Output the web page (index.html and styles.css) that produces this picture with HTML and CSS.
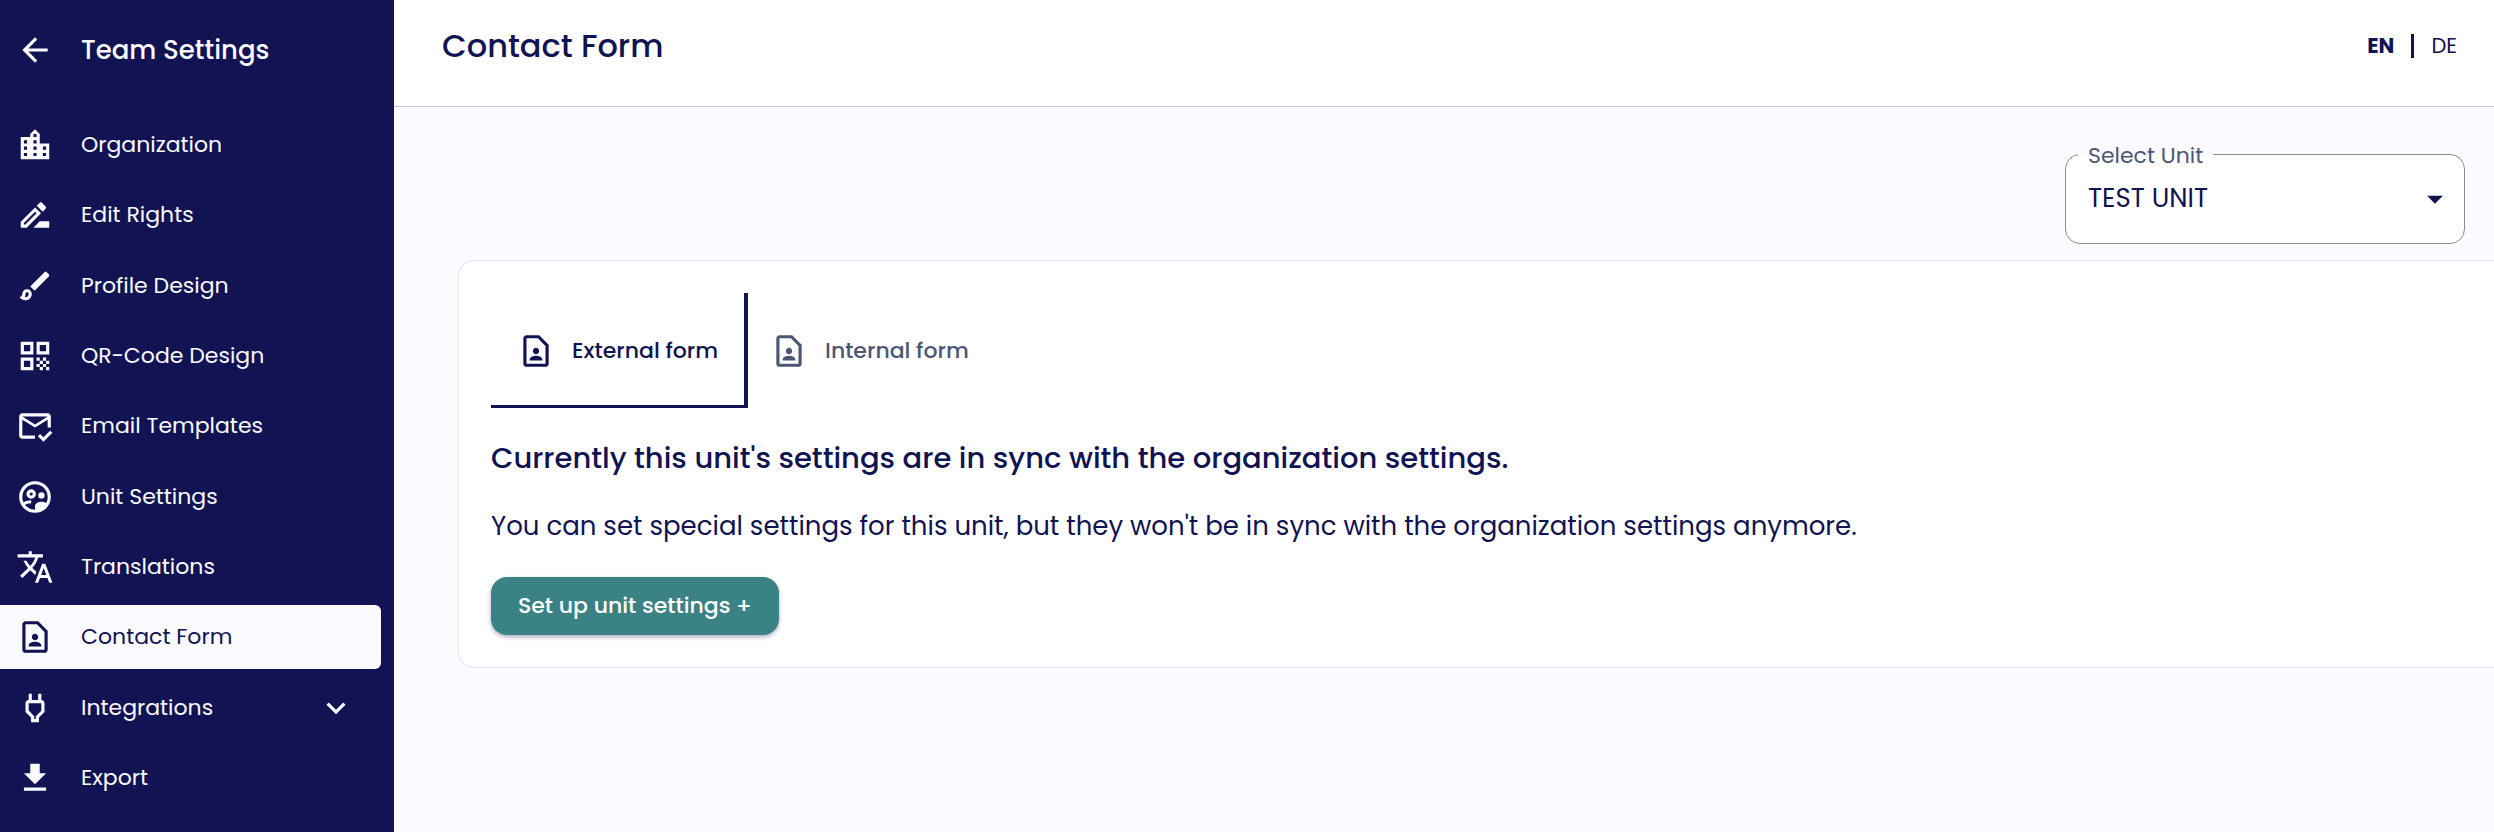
FILE: index.html
```html
<!DOCTYPE html>
<html lang="en">
<head>
<meta charset="utf-8">
<meta name="viewport" content="width=device-width, initial-scale=1">
<title>Contact Form</title>
<link rel="stylesheet" href="styles.css">
</head>
<body>
<svg class="sprite" aria-hidden="true">
  <symbol id="contact-page" viewBox="0 0 24 24"><path d="M13.17 4L18 8.83V20H6V4h7.17M14 2H6c-1.1 0-2 .9-2 2v16c0 1.1.9 2 2 2h12c1.1 0 2-.9 2-2V8l-6-6zM12 14c1.1 0 2-.9 2-2s-.9-2-2-2-2 .9-2 2 .9 2 2 2zM16 17.43c0-.81-.48-1.53-1.22-1.85-.85-.37-1.79-.58-2.78-.58s-1.93.21-2.78.58C8.48 15.9 8 16.62 8 17.43V18h8v-.57z"/></symbol>
</svg>
<div class="app">
  <aside class="sidebar">
    <a class="back" href="#"><svg class="icon" viewBox="0 0 24 24"><path d="M20 11H7.83l5.59-5.59L12 4l-8 8 8 8 1.41-1.41L7.83 13H20v-2z"/></svg><span>Team Settings</span></a>
    <nav class="menu">
      <a class="item" href="#"><svg class="icon" viewBox="0 0 24 24"><path d="M15 11V5l-3-3-3 3v2H3v14h18V11h-6zm-8 8H5v-2h2v2zm0-4H5v-2h2v2zm0-4H5V9h2v2zm6 8h-2v-2h2v2zm0-4h-2v-2h2v2zm0-4h-2V9h2v2zm0-4h-2V5h2v2zm6 12h-2v-2h2v2zm0-4h-2v-2h2v2z"/></svg><span>Organization</span></a>
      <a class="item" href="#"><svg class="icon" viewBox="0 0 24 24"><path d="m15 16-4 4h10v-4zM12.06 7.19 3 16.25V20h3.75l9.06-9.06-3.75-3.75zM5.92 18H5v-.92l7.06-7.06.92.92L5.92 18zM18.71 8.04a.996.996 0 0 0 0-1.41l-2.34-2.34c-.2-.2-.45-.29-.71-.29s-.51.1-.7.29l-1.83 1.83 3.75 3.75z"/></svg><span>Edit Rights</span></a>
      <a class="item" href="#"><svg class="icon" viewBox="0 0 24 24"><path d="M7 16c.55 0 1 .45 1 1 0 1.1-.9 2-2 2-.17 0-.33-.02-.5-.05.31-.55.5-1.21.5-1.95 0-.55.45-1 1-1M18.67 3c-.26 0-.51.1-.71.29L9 12.25 11.75 15l8.96-8.96a.996.996 0 0 0 0-1.41l-1.34-1.34c-.2-.2-.45-.29-.7-.29zM7 14c-1.66 0-3 1.34-3 3 0 1.31-1.16 2-2 2 .92 1.22 2.49 2 4 2 2.21 0 4-1.79 4-4 0-1.66-1.34-3-3-3z"/></svg><span>Profile Design</span></a>
      <a class="item" href="#"><svg class="icon" viewBox="0 0 24 24"><path d="M3 11h8V3H3v8zm2-6h4v4H5V5zM3 21h8v-8H3v8zm2-6h4v4H5v-4zM13 3v8h8V3h-8zm6 6h-4V5h4v4zM19 19h2v2h-2zM13 13h2v2h-2zM15 15h2v2h-2zM13 17h2v2h-2zM15 19h2v2h-2zM17 17h2v2h-2zM17 13h2v2h-2zM19 15h2v2h-2z"/></svg><span>QR-Code Design</span></a>
      <a class="item" href="#"><svg class="icon" viewBox="0 0 24 24"><path d="M12 18H4V8l8 5 8-5v5h2V6c0-1.1-.9-2-2-2H4c-1.1 0-2 .9-2 2v12c0 1.1.9 2 2 2h8v-2zm8-12-8 5-8-5h16zM17.34 22l-3.54-3.54 1.41-1.41 2.12 2.12 4.24-4.24L23 16.34 17.34 22z"/></svg><span>Email Templates</span></a>
      <a class="item" href="#"><svg class="icon" viewBox="0 0 24 24"><g fill="none" stroke="currentColor" stroke-width="2"><circle cx="12" cy="12" r="9"/><circle cx="9.6" cy="10.1" r="2"/><path d="M4.6 16.4c1.2-.9 3.2-1.4 5-1.4"/></g><circle cx="16.1" cy="11" r="2"/><path d="M12 21v-3.4c0-1.7 2.6-2.6 4.1-2.6 1.2 0 2.9.4 3.7 1.2C18.4 19 15.5 21 12 21z"/></svg><span>Unit Settings</span></a>
      <a class="item" href="#"><svg class="icon" viewBox="0 0 24 24"><path d="M12.87 15.07l-2.54-2.51.03-.03c1.74-1.94 2.98-4.17 3.71-6.53H17V4h-7V2H8v2H1v1.99h11.17C11.5 7.92 10.44 9.75 9 11.35 8.07 10.32 7.3 9.19 6.69 8h-2c.73 1.63 1.73 3.17 2.98 4.56l-5.09 5.02L4 19l5-5 3.11 3.11.76-2.04zM18.5 10h-2L12 22h2l1.12-3h4.75L21 22h2l-4.5-12zm-2.62 7l1.62-4.33L19.12 17h-3.24z"/></svg><span>Translations</span></a>
      <a class="item active" href="#" aria-current="page"><svg class="icon"><use href="#contact-page"/></svg><span>Contact Form</span></a>
      <a class="item" href="#"><svg class="icon" viewBox="0 0 24 24"><path d="M16 9v4.66l-3.5 3.51V19h-1v-1.83L8 13.65V9h8m0-6h-2v4h-4V3H8v4h-.01C6.9 6.99 6 7.89 6 8.98v5.52L9.5 18v3h5v-3l3.5-3.51V9c0-1.1-.9-2-2-2V3z"/></svg><span>Integrations</span><svg class="icon chevron" viewBox="0 0 24 24"><path d="M16.59 8.59 12 13.17 7.41 8.59 6 10l6 6 6-6z"/></svg></a>
      <a class="item" href="#"><svg class="icon" viewBox="0 0 24 24"><path d="M19 9h-4V3H9v6H5l7 7 7-7zM5 18v2h14v-2H5z"/></svg><span>Export</span></a>
    </nav>
  </aside>
  <div class="page">
    <header class="topbar">
      <h1 class="title">Contact Form</h1>
      <div class="languages">
        <button class="language current" type="button">EN</button>
        <span class="divider"></span>
        <button class="language" type="button">DE</button>
      </div>
    </header>
    <main class="content">
      <fieldset class="unit">
        <legend class="unit-legend"><label for="unit">Select Unit</label></legend>
        <div class="unit-field">
          <select class="unit-select" id="unit"><option>TEST UNIT</option></select>
          <svg class="icon unit-arrow" viewBox="0 0 24 24"><path d="m7 10 5 5 5-5z"/></svg>
        </div>
      </fieldset>
      <section class="card">
        <div class="tabs" role="tablist">
          <button class="tab selected" type="button" role="tab" aria-selected="true"><svg class="icon"><use href="#contact-page"/></svg><span>External form</span></button>
          <button class="tab" type="button" role="tab" aria-selected="false"><svg class="icon"><use href="#contact-page"/></svg><span>Internal form</span></button>
        </div>
        <h2 class="status">Currently this unit's settings are in sync with the organization settings.</h2>
        <p class="hint">You can set special settings for this unit, but they won't be in sync with the organization settings anymore.</p>
        <button class="setup" type="button">Set up unit settings +</button>
      </section>
    </main>
  </div>
</div>
</body>
</html>
```
FILE: styles.css
```css
:root {
  --navy: #111352;
  --slate: #4b5675;
  --paper: #fbfaff;
  --teal: #3a8283;
}

* {
  box-sizing: border-box;
}

body {
  margin: 0;
  color: var(--navy);
  background: var(--paper);
  font-family: Poppins, Inter, "Open Sans", sans-serif;
  font-size: 22px;
  line-height: 32px;
}

button,
select {
  margin: 0;
  padding: 0;
  border: 0;
  color: inherit;
  background: none;
  font: inherit;
}

a {
  color: inherit;
  text-decoration: none;
}

.sprite {
  display: none;
}

.icon {
  flex: none;
  width: 38px;
  height: 38px;
  fill: currentColor;
}

.app {
  display: flex;
  min-height: 100vh;
}

.sidebar {
  display: flex;
  flex: none;
  flex-direction: column;
  width: 394px;
  padding: 18px 13px 22px 0;
  color: var(--paper);
  background: var(--navy);
}

.back,
.item {
  display: flex;
  align-items: center;
  gap: 27px;
  height: 64px;
  padding: 0 26px 0 16px;
}

.back {
  margin-bottom: 31px;
  font-size: 26px;
  font-weight: 500;
}

.menu {
  display: flex;
  flex: 1;
  flex-direction: column;
  justify-content: space-between;
}

.item.active {
  color: var(--navy);
  background: var(--paper);
  border-radius: 0 6px 6px 0;
}

.chevron {
  margin-left: auto;
}

.page {
  flex: 1;
  min-width: 0;
}

.topbar {
  display: flex;
  align-items: flex-start;
  justify-content: space-between;
  padding: 26px 37px 40px 48px;
  background: #fff;
  border-bottom: 1px solid #c9c6dc;
}

.title {
  margin: 0;
  font-size: 32px;
  font-weight: 500;
  line-height: 40px;
}

.languages {
  display: flex;
  align-items: center;
  gap: 17px;
  height: 40px;
  font-size: 21px;
}

.language.current {
  font-weight: 700;
}

.divider {
  width: 3px;
  height: 24px;
  background: var(--navy);
}

.content {
  display: flex;
  flex-direction: column;
  padding: 35px 0 40px 64px;
}

.unit {
  align-self: flex-end;
  width: 400px;
  margin: 0 29px 16px 0;
  padding: 0;
  background: #fff;
  border: 1px solid #8b8b90;
  border-radius: 15px;
}

.unit-legend {
  margin-left: 12px;
  padding: 4px 10px 0;
  color: var(--slate);
  font-size: 22px;
  line-height: 20px;
}

.unit-field {
  position: relative;
}

.unit-select {
  display: block;
  width: 100%;
  padding: 16px 64px 29px 22px;
  appearance: none;
  font-size: 26px;
  line-height: 32px;
}

.unit-arrow {
  position: absolute;
  top: 14px;
  right: 10px;
  pointer-events: none;
}

.card {
  padding: 32px;
  background: #fff;
  border: 1px solid #e6e4f0;
  border-right: 0;
  border-radius: 16px 0 0 16px;
}

.tabs {
  display: flex;
}

.tab {
  display: flex;
  align-items: center;
  gap: 17px;
  height: 115px;
  padding: 0 22px;
  color: var(--slate);
  font-weight: 500;
}

.tab.selected {
  padding: 3px 26px 0;
  color: var(--navy);
  border-right: 4px solid var(--navy);
  border-bottom: 3px solid var(--navy);
}

.status {
  margin: 32px 0;
  font-size: 29px;
  font-weight: 500;
  line-height: 36px;
}

.hint {
  margin: 0 0 33px;
  font-size: 26px;
  line-height: 36px;
}

.setup {
  height: 58px;
  padding: 0 27px;
  color: #fff;
  background: var(--teal);
  border-radius: 16px;
  box-shadow: 0 2px 4px rgb(17 17 80 / 35%);
  font-weight: 500;
}
```
